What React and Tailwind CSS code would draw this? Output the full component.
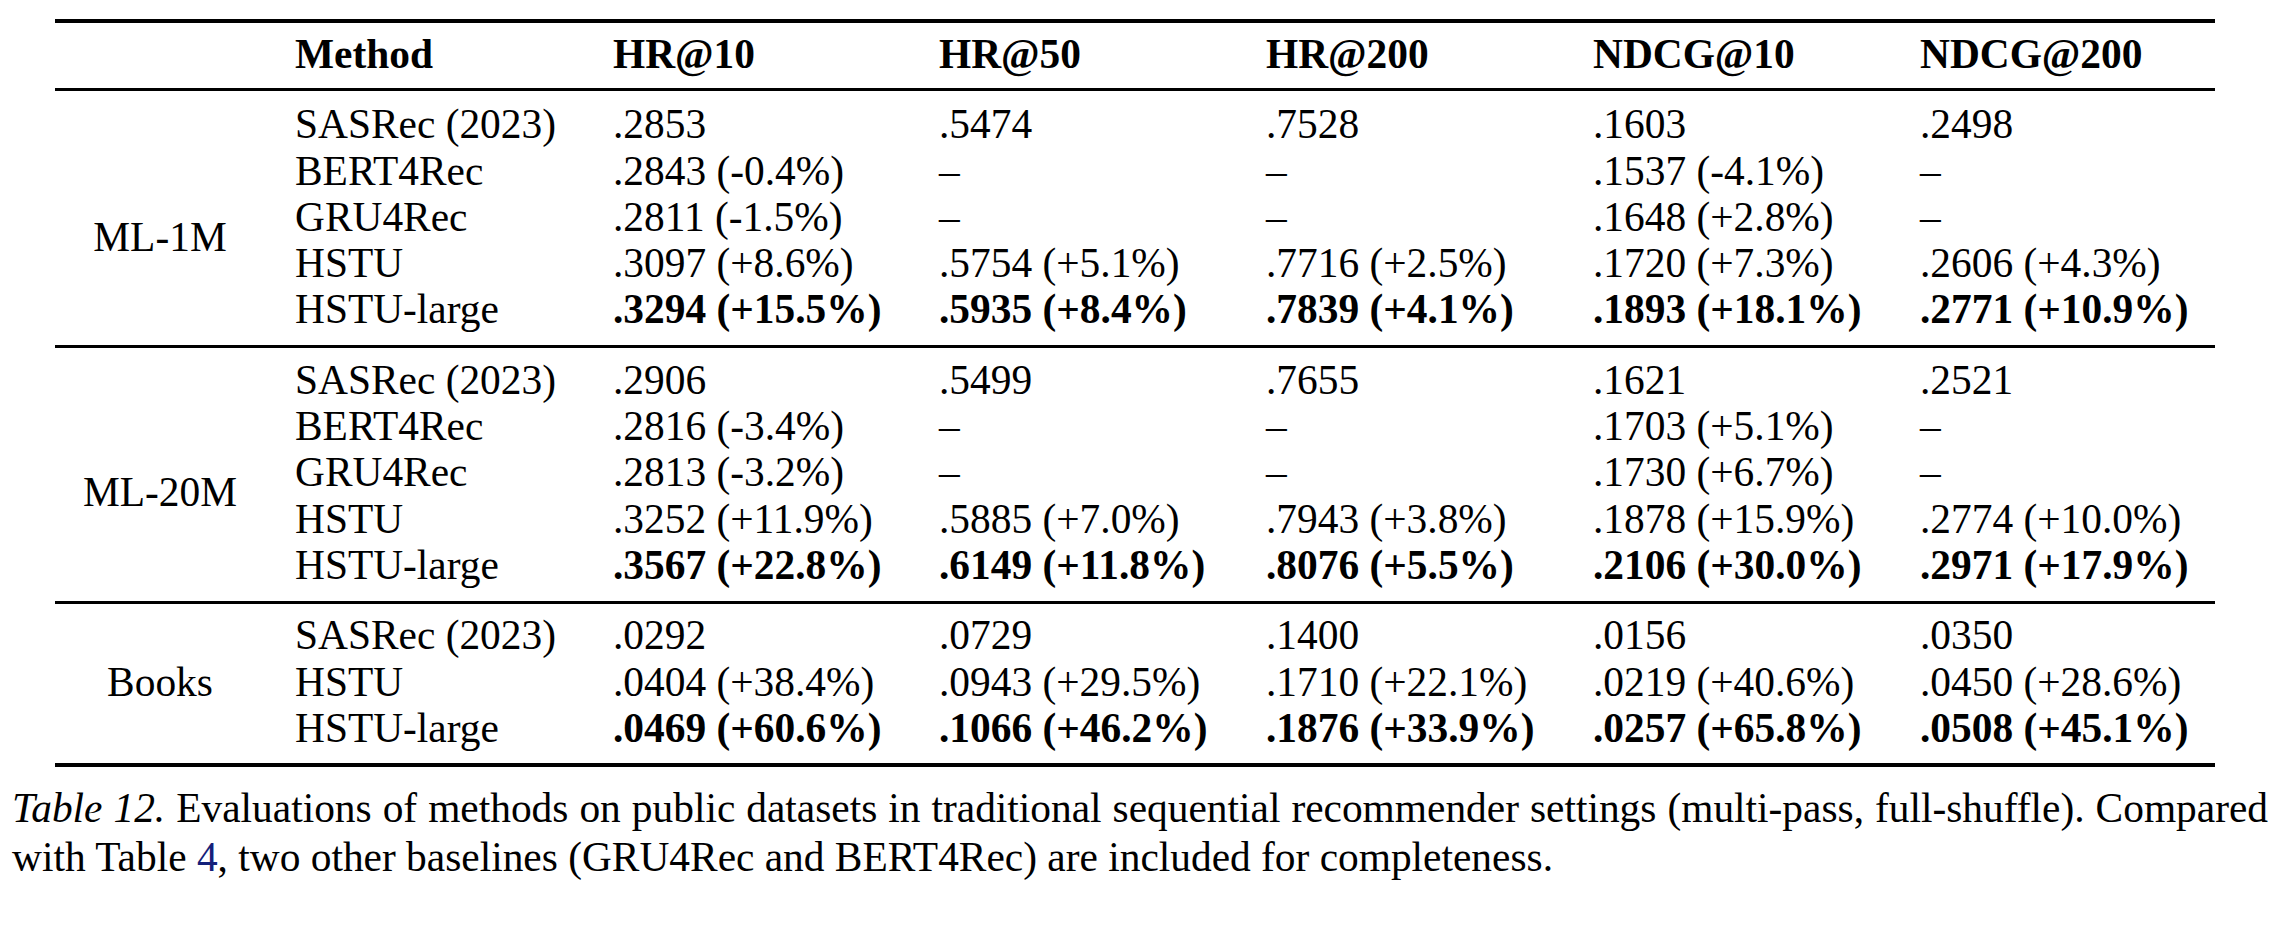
import React from 'react';

const COLS = 'grid grid-cols-[318px_326px_327px_327px_327px_325px]';

const HEADERS = ['Method', 'HR@10', 'HR@50', 'HR@200', 'NDCG@10', 'NDCG@200'];

const BLOCKS = [
  {
    name: 'ML-1M',
    shift: true,
    pad: 'pt-[10px] pb-[12px]',
    rows: [
      { method: 'SASRec (2023)', values: ['.2853', '.5474', '.7528', '.1603', '.2498'] },
      { method: 'BERT4Rec', values: ['.2843 (-0.4%)', '–', '–', '.1537 (-4.1%)', '–'] },
      { method: 'GRU4Rec', values: ['.2811 (-1.5%)', '–', '–', '.1648 (+2.8%)', '–'] },
      { method: 'HSTU', values: ['.3097 (+8.6%)', '.5754 (+5.1%)', '.7716 (+2.5%)', '.1720 (+7.3%)', '.2606 (+4.3%)'] },
      { method: 'HSTU-large', bold: true, values: ['.3294 (+15.5%)', '.5935 (+8.4%)', '.7839 (+4.1%)', '.1893 (+18.1%)', '.2771 (+10.9%)'] },
    ],
  },
  {
    name: 'ML-20M',
    shift: true,
    pad: 'pt-[9px] pb-[13px]',
    rows: [
      { method: 'SASRec (2023)', values: ['.2906', '.5499', '.7655', '.1621', '.2521'] },
      { method: 'BERT4Rec', values: ['.2816 (-3.4%)', '–', '–', '.1703 (+5.1%)', '–'] },
      { method: 'GRU4Rec', values: ['.2813 (-3.2%)', '–', '–', '.1730 (+6.7%)', '–'] },
      { method: 'HSTU', values: ['.3252 (+11.9%)', '.5885 (+7.0%)', '.7943 (+3.8%)', '.1878 (+15.9%)', '.2774 (+10.0%)'] },
      { method: 'HSTU-large', bold: true, values: ['.3567 (+22.8%)', '.6149 (+11.8%)', '.8076 (+5.5%)', '.2106 (+30.0%)', '.2971 (+17.9%)'] },
    ],
  },
  {
    name: 'Books',
    shift: false,
    pad: 'pt-[8px] pb-[12px]',
    rows: [
      { method: 'SASRec (2023)', values: ['.0292', '.0729', '.1400', '.0156', '.0350'] },
      { method: 'HSTU', values: ['.0404 (+38.4%)', '.0943 (+29.5%)', '.1710 (+22.1%)', '.0219 (+40.6%)', '.0450 (+28.6%)'] },
      { method: 'HSTU-large', bold: true, values: ['.0469 (+60.6%)', '.1066 (+46.2%)', '.1876 (+33.9%)', '.0257 (+65.8%)', '.0508 (+45.1%)'] },
    ],
  },
];

function Block({ block }) {
  return (
    <div className={`flex ${block.pad}`}>
      {/* dataset label, multirow style */}
      <div className={`w-[210px] flex items-center justify-center ${block.shift ? 'pt-[40px]' : ''}`}>
        {block.name}
      </div>
      <div>
        {block.rows.map((row) => (
          <div key={row.method} className={COLS}>
            <div className="pl-[30px] whitespace-nowrap">{row.method}</div>
            {row.values.map((v, i) => (
              <div key={i} className={`pl-[30px] whitespace-nowrap ${row.bold ? 'font-bold' : ''}`}>
                {v}
              </div>
            ))}
          </div>
        ))}
      </div>
    </div>
  );
}

export default function App() {
  return (
    <div className="w-[2286px] h-[926px] bg-white text-black font-['Liberation_Serif',serif] text-[41.4px] leading-[46.3px] overflow-hidden">
      {/* Table */}
      <div className="ml-[55px] w-[2160px] pt-[19px]">
        <div className="h-[4px] bg-black" />
        <div className="flex pt-[8px] pb-[11px] font-bold">
          <div className="w-[210px]" />
          <div className={COLS}>
            {HEADERS.map((h) => (
              <div key={h} className="pl-[30px] whitespace-nowrap">{h}</div>
            ))}
          </div>
        </div>
        <div className="h-[3px] bg-black" />
        <Block block={BLOCKS[0]} />
        <div className="h-[3px] bg-black" />
        <Block block={BLOCKS[1]} />
        <div className="h-[3px] bg-black" />
        <Block block={BLOCKS[2]} />
        <div className="h-[4px] bg-black" />
      </div>

      {/* Caption */}
      <div className="ml-[12px] mt-[17px] leading-[49px]">
        <div className="w-[2256px] whitespace-nowrap text-justify [text-align-last:justify] [word-spacing:-3px]">
          <span className="italic">Table 12.</span> Evaluations of methods on public datasets in traditional sequential recommender settings (multi-pass, full-shuffle). Compared
        </div>
        <div className="whitespace-nowrap">
          with Table <span className="text-[#14207a]">4</span>, two other baselines (GRU4Rec and BERT4Rec) are included for completeness.
        </div>
      </div>
    </div>
  );
}
